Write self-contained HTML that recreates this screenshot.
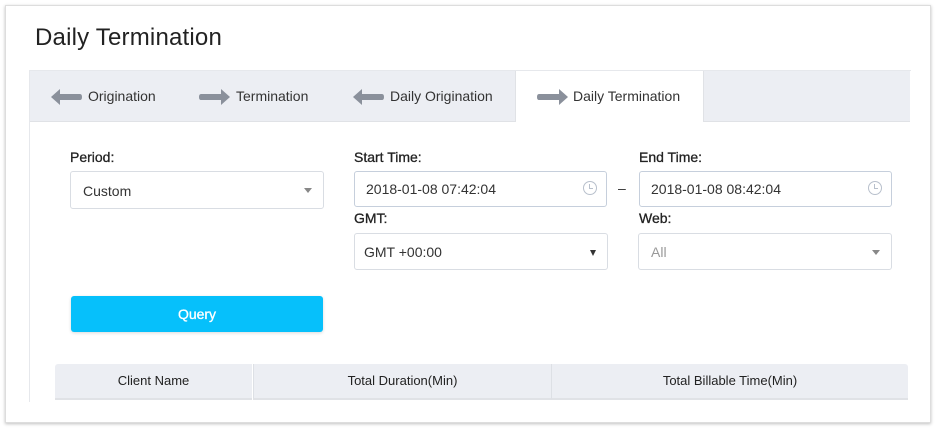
<!DOCTYPE html>
<html><head><style>
body{margin:0;width:936px;height:428px;background:#fff;font-family:"Liberation Sans",sans-serif;position:relative;overflow:hidden}
.frame{position:absolute;left:5px;top:5px;width:924px;height:416px;border:1px solid #ddd;box-shadow:0 1px 3px rgba(0,0,0,.25);background:#fff}
.a{position:absolute}
h1{position:absolute;left:35px;top:24px;margin:0;font-weight:normal;font-size:24px;color:#222;letter-spacing:.2px}
.panel{left:29px;top:70px;width:881px;height:331px;border-left:1px solid #e6e8ec;border-top:1px solid #e6e8ec}
.tabs{left:30px;top:71px;width:880px;height:50px;background:#eceef3;border-bottom:1px solid #e0e2e6}
.tab{position:absolute;top:71px;height:50px;font-size:14px;color:#333;line-height:50px}
.tab svg{position:absolute;top:18px}
.lbl{font-size:14px;color:#222;-webkit-text-stroke:.3px #222}
.box{border:1px solid #d9dde3;border-radius:3px;background:#fff;height:35px;font-size:14px;color:#333;line-height:35px;box-sizing:border-box;padding-left:12px}
.caret{position:absolute;right:11px;top:16px;width:0;height:0;border-left:4px solid transparent;border-right:4px solid transparent;border-top:5px solid #888}
.clock{position:absolute;right:9px;top:9px;width:12px;height:12px;border:1.5px solid #b8c0cc;border-radius:50%}
.clock:after{content:"";position:absolute;left:5px;top:2px;width:3px;height:4px;border-left:1.3px solid #b8c0cc;border-bottom:1.3px solid #b8c0cc}
.th{position:absolute;top:364px;height:34px;line-height:34px;text-align:center;font-size:13px;color:#222;background:#eceef3;border-bottom:2px solid #e0e2e6}
</style></head><body>
<div class="frame"></div>
<h1>Daily Termination</h1>
<div class="a panel"></div>
<div class="a tabs"></div>
<div class="a" style="left:515px;top:71px;width:187px;height:51px;background:#fff;border-left:1px solid #e0e2e6;border-right:1px solid #e0e2e6"></div>
<div class="tab" style="left:51px"><svg width="32" height="16" viewBox="0 0 32 16"><path d="M0 8L9 0V5H29Q31 5 31 8Q31 11 29 11H9V16Z" fill="#8a909b"/></svg><span style="margin-left:37px">Origination</span></div>
<div class="tab" style="left:198px"><svg width="32" height="16" viewBox="0 0 32 16"><path d="M32 8L23 0V5H3Q1 5 1 8Q1 11 3 11H23V16Z" fill="#8a909b"/></svg><span style="margin-left:38px">Termination</span></div>
<div class="tab" style="left:353px"><svg width="32" height="16" viewBox="0 0 32 16"><path d="M0 8L9 0V5H29Q31 5 31 8Q31 11 29 11H9V16Z" fill="#8a909b"/></svg><span style="margin-left:37px">Daily Origination</span></div>
<div class="tab" style="left:536px"><svg width="32" height="16" viewBox="0 0 32 16"><path d="M32 8L23 0V5H3Q1 5 1 8Q1 11 3 11H23V16Z" fill="#8a909b"/></svg><span style="margin-left:37px">Daily Termination</span></div>

<div class="a lbl" style="left:70px;top:149px">Period:</div>
<div class="a box" style="left:70px;top:171px;width:254px;height:38px;line-height:38px">Custom<span class="caret"></span></div>
<div class="a lbl" style="left:354px;top:149px">Start Time:</div>
<div class="a box" style="left:354px;top:171px;width:253px;height:36px;border-color:#c6cfdc;padding-left:11px">2018-01-08 07:42:04<span class="clock"></span></div>
<div class="a" style="left:618px;top:180px;font-size:14px;color:#333">–</div>
<div class="a lbl" style="left:639px;top:149px">End Time:</div>
<div class="a box" style="left:639px;top:171px;width:253px;height:36px;border-color:#c6cfdc;padding-left:11px">2018-01-08 08:42:04<span class="clock"></span></div>
<div class="a lbl" style="left:354px;top:210px">GMT:</div>
<div class="a box" style="left:354px;top:233px;width:254px;height:37px;line-height:37px;padding-left:9px">GMT +00:00<span class="caret" style="border-top-color:#333;border-left-width:3px;border-right-width:3px;border-top-width:6px"></span></div>
<div class="a lbl" style="left:639px;top:210px">Web:</div>
<div class="a box" style="left:638px;top:233px;width:254px;height:37px;line-height:37px;color:#999">All<span class="caret"></span></div>

<div class="a" style="left:71px;top:296px;width:252px;height:36px;background:#06c0fb;border-radius:3px;color:#fff;text-align:center;line-height:36px;font-size:14px;-webkit-text-stroke:.3px #fff;box-shadow:0 1px 3px rgba(0,0,0,.15)">Query</div>

<div class="th" style="left:55px;width:197px;border-radius:3px 0 0 0">Client Name</div>
<div class="th" style="left:253px;width:297px;border-left:1px solid #dde0e5">Total Duration(Min)</div>
<div class="th" style="left:551px;width:356px;border-left:1px solid #dde0e5;border-radius:0 3px 0 0">Total Billable Time(Min)</div>
</body></html>
